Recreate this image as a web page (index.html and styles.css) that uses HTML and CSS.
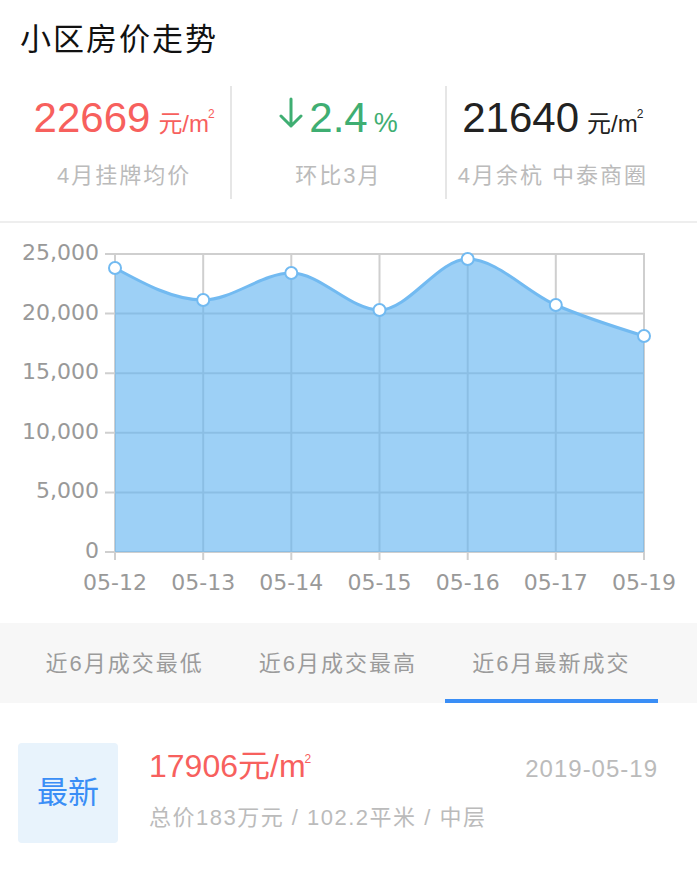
FILE: index.html
```html
<!DOCTYPE html>
<html lang="zh-CN">
<head>
    <meta charset="UTF-8">
    <meta name="viewport" content="width=device-width, initial-scale=1.0">
    <title>小区房价走势</title>
    <link rel="stylesheet" href="styles.css">
</head>
<body>
    <h1 class="title">小区房价走势</h1>

    <div class="stats">
        <div class="stat">
            <div class="stat-value red">22669<span class="unit">元/m<sup>2</sup></span></div>
            <div class="stat-label">4月挂牌均价</div>
        </div>
        <div class="stat">
            <div class="stat-value green">
                <svg class="arrow" width="24" height="32" viewBox="0 0 24 32">
                    <path d="M12 2 L12 29 M2 19 L12 29 L22 19" fill="none" stroke="#3fae72" stroke-width="3" stroke-linecap="round" stroke-linejoin="round"/>
                </svg>2.4<span class="pct">%</span>
            </div>
            <div class="stat-label">环比3月</div>
        </div>
        <div class="stat">
            <div class="stat-value dark">21640<span class="unit">元/m<sup>2</sup></span></div>
            <div class="stat-label">4月余杭 中泰商圈</div>
        </div>
    </div>

    <!-- 房价走势图 -->
    <div class="chart">
        <svg width="697" height="400" viewBox="0 222 697 400">
            <g stroke="#cfcfcf" stroke-width="2">
                <line x1="105" y1="253" x2="645" y2="253"/>
                <line x1="105" y1="312.6" x2="645" y2="312.6"/>
                <line x1="105" y1="372.2" x2="645" y2="372.2"/>
                <line x1="105" y1="431.8" x2="645" y2="431.8"/>
                <line x1="105" y1="491.4" x2="645" y2="491.4"/>
                <line x1="105" y1="551" x2="645" y2="551"/>
                <line x1="115" y1="253" x2="115" y2="559"/>
                <line x1="203.2" y1="253" x2="203.2" y2="559"/>
                <line x1="291.3" y1="253" x2="291.3" y2="559"/>
                <line x1="379.5" y1="253" x2="379.5" y2="559"/>
                <line x1="467.7" y1="253" x2="467.7" y2="559"/>
                <line x1="555.8" y1="253" x2="555.8" y2="559"/>
                <line x1="644" y1="253" x2="644" y2="559"/>
            </g>
            <path class="area" d="M115,267 C144.4,283 173.8,299 203.2,299 C232.6,299 261.9,272 291.3,272 C320.7,272 350.1,309 379.5,309 C408.9,309 438.3,258 467.7,258 C497.1,258 526.4,291.2 555.8,304 C585.2,316.8 614.6,325.9 644,335 L644,551 L115,551 Z"/>
            <path class="line" d="M115,267 C144.4,283 173.8,299 203.2,299 C232.6,299 261.9,272 291.3,272 C320.7,272 350.1,309 379.5,309 C408.9,309 438.3,258 467.7,258 C497.1,258 526.4,291.2 555.8,304 C585.2,316.8 614.6,325.9 644,335"/>
            <g class="dots">
                <circle cx="115" cy="267" r="6"/>
                <circle cx="203.2" cy="299" r="6"/>
                <circle cx="291.3" cy="272" r="6"/>
                <circle cx="379.5" cy="309" r="6"/>
                <circle cx="467.7" cy="258" r="6"/>
                <circle cx="555.8" cy="304" r="6"/>
                <circle cx="644" cy="335" r="6"/>
            </g>
            <g class="axis-y" text-anchor="end">
                <text x="99" y="259">25,000</text>
                <text x="99" y="318.6">20,000</text>
                <text x="99" y="378.2">15,000</text>
                <text x="99" y="437.8">10,000</text>
                <text x="99" y="497.4">5,000</text>
                <text x="99" y="557">0</text>
            </g>
            <g class="axis-x" text-anchor="middle">
                <text x="115" y="589">05-12</text>
                <text x="203.2" y="589">05-13</text>
                <text x="291.3" y="589">05-14</text>
                <text x="379.5" y="589">05-15</text>
                <text x="467.7" y="589">05-16</text>
                <text x="555.8" y="589">05-17</text>
                <text x="644" y="589">05-19</text>
            </g>
        </svg>
    </div>

    <div class="tabs">
        <div class="tab">近6月成交最低</div>
        <div class="tab">近6月成交最高</div>
        <div class="tab active">近6月最新成交</div>
    </div>

    <div class="deal">
        <div class="badge">最新</div>
        <div class="deal-info">
            <div class="deal-top">
                <span class="deal-price">17906元/m<sup>2</sup></span>
                <span class="deal-date">2019-05-19</span>
            </div>
            <div class="deal-desc">总价183万元 / 102.2平米 / 中层</div>
        </div>
    </div>
</body>
</html>
```

FILE: styles.css
```css
body {
    margin: 0;
    background-color: #ffffff;
    font-family: "Liberation Sans", "Noto Sans CJK SC", sans-serif;
    color: #222;
}
.title {
    margin: 0;
    padding: 18px 20px 0;
    font-size: 31px;
    font-weight: normal;
    line-height: 44px;
    letter-spacing: 2px;
    color: #111;
}
.stats {
    display: flex;
    margin-top: 24px;
    padding: 0 38px 22px 18px;
    border-bottom: 2px solid #eeeeee;
}
.stat {
    flex: 1;
    display: flex;
    flex-direction: column;
    align-items: center;
    height: 113px;
    padding-top: 10px;
    box-sizing: border-box;
    border-left: 2px solid #e6e6e6;
}
.stat:first-child {
    border-left: none;
}
.stat-value {
    font-size: 42px;
    line-height: 44px;
    white-space: nowrap;
}
.stat-value.red {
    color: #f7605d;
}
.stat-value.green {
    color: #3fae72;
}
.stat-value.dark {
    color: #222;
}
.unit {
    font-size: 24px;
    line-height: 24px;
    margin-left: 8px;
}
.unit sup,
.deal-price sup {
    font-size: 12px;
    line-height: 12px;
    vertical-align: 14px;
    margin-left: -1px;
}
.arrow {
    vertical-align: 3px;
    margin-right: 6px;
}
.pct {
    font-size: 27px;
    line-height: 27px;
    margin-left: 6px;
}
.stat-label {
    margin-top: 21px;
    font-size: 22px;
    line-height: 30px;
    letter-spacing: 2px;
    color: #bbbbbb;
    white-space: nowrap;
}
.chart svg {
    display: block;
}
.area {
    fill: #63b4f0;
    fill-opacity: 0.63;
}
.line {
    fill: none;
    stroke: #72baf1;
    stroke-width: 3;
}
.dots circle {
    fill: #ffffff;
    stroke: #72baf1;
    stroke-width: 2;
}
.axis-y text,
.axis-x text {
    font-family: "DejaVu Sans", sans-serif;
    font-size: 22px;
    fill: #999999;
}
.tabs {
    display: flex;
    height: 80px;
    padding: 0 39px 0 18px;
    background-color: #f7f7f7;
}
.tab {
    flex: 1;
    display: flex;
    align-items: center;
    justify-content: center;
    font-size: 22px;
    letter-spacing: 2px;
    color: #9b9b9b;
    box-sizing: border-box;
    border-bottom: 4px solid transparent;
}
.tab.active {
    border-bottom-color: #3a8ef6;
}
.deal {
    display: flex;
    padding: 40px 39px 0 18px;
}
.badge {
    width: 100px;
    height: 100px;
    flex-shrink: 0;
    display: flex;
    align-items: center;
    justify-content: center;
    box-sizing: border-box;
    padding-bottom: 8px;
    background-color: #e8f3fc;
    border-radius: 4px;
    font-size: 31px;
    color: #3a8ef6;
}
.deal-info {
    flex: 1;
    margin-left: 31px;
    margin-top: 7px;
}
.deal-top {
    display: flex;
    justify-content: space-between;
    align-items: baseline;
    line-height: 40px;
}
.deal-price {
    font-size: 32px;
    line-height: 32px;
    color: #f7605d;
}
.deal-date {
    font-size: 24px;
    line-height: 24px;
    letter-spacing: 1px;
    color: #bbbbbb;
}
.deal-desc {
    margin-top: 21px;
    font-size: 22px;
    line-height: 30px;
    letter-spacing: 1.5px;
    color: #bbbbbb;
}
```
